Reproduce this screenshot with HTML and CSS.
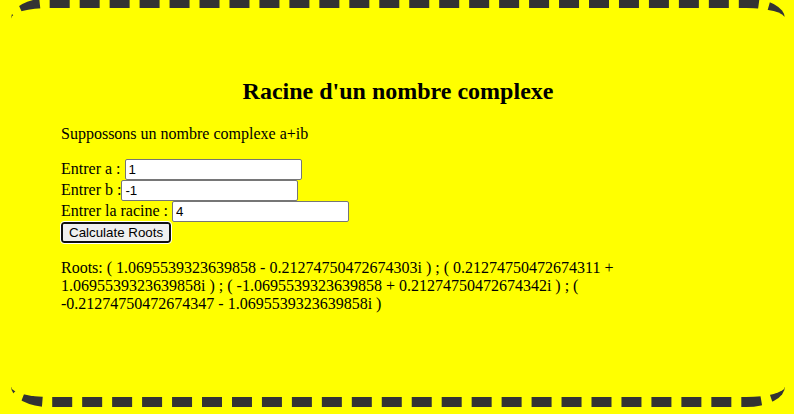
FILE: index.html
```html
<!DOCTYPE html>
<html lang="fr">
<head>
<meta charset="utf-8">
<title>Racine d'un nombre complexe</title>
<link rel="stylesheet" href="styles.css">
</head>
<body>
<main class="card">
<h2 class="title">Racine d'un nombre complexe</h2>
<p>Suppossons un nombre complexe a+ib</p>
<form class="form">
<div><label for="a">Entrer a : </label> <input class="field" id="a" type="text" value="1"></div>
<div><label for="b">Entrer b :</label><input class="field" id="b" type="text" value="-1"></div>
<div><label for="n">Entrer la racine : </label> <input class="field" id="n" type="text" value="4"></div>
<div><button class="submit" type="button">Calculate Roots</button></div>
</form>
<p class="result">Roots: ( 1.0695539323639858 - 0.21274750472674303i ) ; ( 0.21274750472674311 + 1.0695539323639858i ) ; ( -1.0695539323639858 + 0.21274750472674342i ) ; ( -0.21274750472674347 - 1.0695539323639858i )</p>
</main>
</body>
</html>
```
FILE: styles.css
```css
body {
  margin: -2px 9px 0 11px;
  background: #ff0;
  color: #000;
  font: 16px/18px "Liberation Serif", "Times New Roman", serif;
}
.card {
  border: 10px dashed #333;
  border-width: 10px 0;
  border-radius: 5%;
  padding: 50px 50px 68px;
}
.title {
  margin: 20px 0;
  font-size: 24px;
  line-height: 27px;
  text-align: center;
}
.result {
  max-width: 580px;
}
.field {
  box-sizing: border-box;
  width: 177px;
  height: 21px;
  padding: 1px 3px;
  border: 1px solid #767676;
  border-radius: 2px;
  font-family: "Liberation Sans", Arial, sans-serif;
}
.submit {
  height: 21px;
  padding: 1px 6px;
  border: 2px solid #101010;
  border-radius: 3px;
  outline: 1px solid #fff;
  background: #efefef;
  font-family: "Liberation Sans", Arial, sans-serif;
}
```
